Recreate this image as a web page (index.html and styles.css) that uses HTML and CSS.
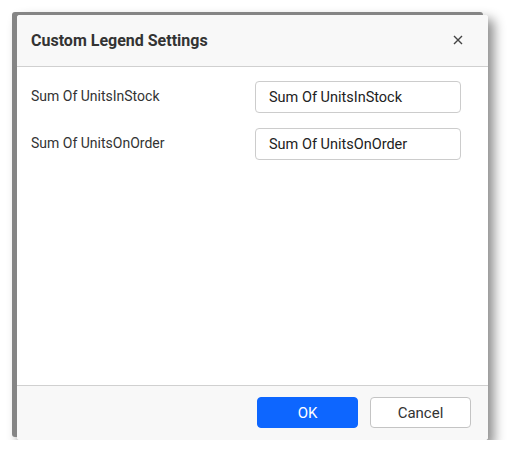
FILE: index.html
```html
<!DOCTYPE html>
<html>
<head>
<meta charset="utf-8">
<link rel="stylesheet" href="styles.css">
</head>
<body>
<div class="dialog">
  <div class="header">
    <div class="title">Custom Legend Settings</div>
    <svg class="close" width="10" height="10" viewBox="0 0 10 10"><path d="M1 1 L9 9 M9 1 L1 9" stroke="#444" stroke-width="1.4" fill="none"/></svg>
  </div>
  <div class="content">
    <div class="row">
      <div class="label">Sum Of UnitsInStock</div>
      <div class="input">Sum Of UnitsInStock</div>
    </div>
    <div class="row">
      <div class="label">Sum Of UnitsOnOrder</div>
      <div class="input">Sum Of UnitsOnOrder</div>
    </div>
  </div>
  <div class="footer">
    <button class="btn primary">OK</button>
    <button class="btn">Cancel</button>
  </div>
</div>
</body>
</html>
```
FILE: styles.css
```css
html, body { margin: 0; padding: 0; background: #fff; }
body { font-family: Roboto, "Noto Sans", sans-serif; padding: 15px 0 0 17px; }
.dialog {
  width: 471px;
  height: 425px;
  background: #fff;
  border-radius: 3px;
  display: flex;
  flex-direction: column;
  box-shadow: -5px -3px 0 0 #858585, 4px 6px 12px 2px rgba(0,0,0,0.45);
  overflow: hidden;
}
.header {
  height: 52px;
  box-sizing: border-box;
  background: #f8f8f8;
  border-bottom: 1px solid #d0d0d0;
  display: flex;
  align-items: center;
  justify-content: space-between;
  padding: 0 25px 0 14px;
}
.title { font-size: 16px; font-weight: 700; color: #333; }
.close { display: block; margin-top: -1px; }
.content {
  flex: 1;
  padding: 14px 27px 0 14px;
  display: flex;
  flex-direction: column;
  gap: 15px;
}
.row { display: grid; grid-template-columns: 224px 206px; align-items: center; }
.label { font-size: 14px; color: #333; margin-top: -3px; }
.input {
  height: 32px;
  box-sizing: border-box;
  border: 1px solid #ccc;
  border-radius: 4px;
  padding: 0 13px;
  font-size: 14.5px;
  color: #222;
  display: flex;
  align-items: center;
}
.footer {
  height: 55px;
  box-sizing: border-box;
  background: #f8f8f8;
  border-top: 1px solid #d0d0d0;
  display: flex;
  justify-content: flex-end;
  align-items: flex-start;
  gap: 12px;
  padding: 11px 17px 0 0;
}
.btn {
  width: 101px;
  height: 31px;
  border: 1px solid #c4c4c4;
  border-radius: 4px;
  background: #fff;
  font-family: Roboto, "Noto Sans", sans-serif;
  font-size: 15px;
  color: #333;
}
.btn.primary { background: #0d66ff; border-color: #0d66ff; color: #fff; }
```
